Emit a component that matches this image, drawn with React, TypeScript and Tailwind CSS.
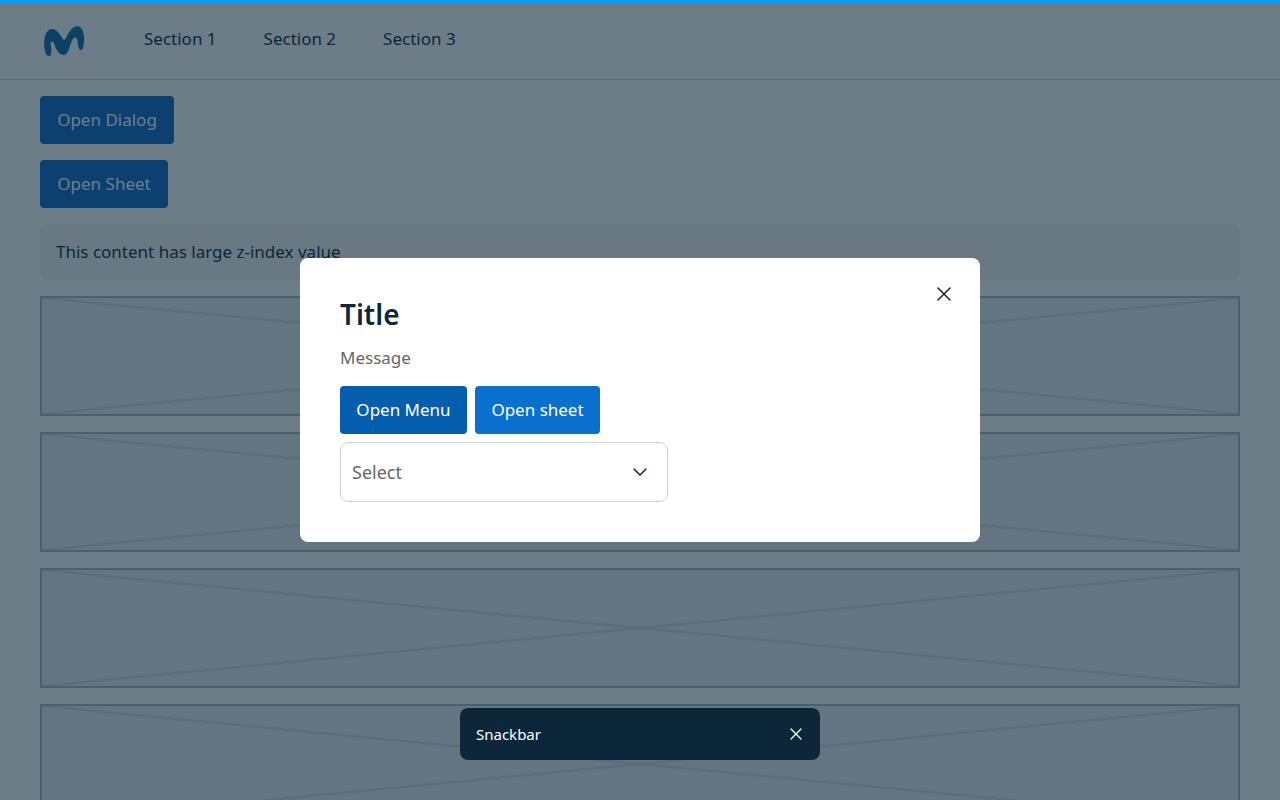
import React from "react";
import { ChevronDown, X } from "lucide-react";

const font = "font-['Noto_Sans','Open_Sans',sans-serif]";

const Placeholder = () => (
    <div className="h-[120px] shrink-0 border-2 border-[#a3b4c0] bg-[#e6eaec]">
        <svg className="h-full w-full" viewBox="0 0 100 100" preserveAspectRatio="none">
            <path d="M0 0L100 100M100 0L0 100" stroke="#cbd5dc" strokeWidth="2" vectorEffect="non-scaling-stroke" fill="none" />
        </svg>
    </div>
);

const Logo = () => (
    <svg width="40" height="30" viewBox="0 0 40 30" className="shrink-0">
        <path
            d="M4.7 30C2 30 .8 26 .3 21C-.6 12 2 3 8 3C13 3 16 9 19 13C20 14.5 21 14 22 12C25 6 28 .2 33 .2C38 .2 40 6 40 12C40 18 39.5 24 37 24C34.5 24 34.2 20 33.8 16.5C33.5 13.5 32.8 11.5 31.2 11.5C29 11.5 27.5 15.5 26 20C24.5 25 23 29 19.5 29C15.5 29 12.5 24.5 11 20C10.2 17.5 9.3 15.5 8 15.5C6.6 15.5 6.5 18 7 21C7.6 25 7.8 30 4.7 30Z"
            fill="#0b6aa6"
        />
    </svg>
);

const App = () => {
    return (
        <div className={`relative h-[800px] w-[1280px] overflow-hidden bg-white text-[17px] text-[#0b2739] ${font}`}>
            {/* page under the overlay */}
            <div className="h-1 bg-[#0b9cf0]" />
            <header className="flex h-[76px] items-center gap-[47px] border-b border-[#0b2739]/20 pb-[6px] pl-10">
                <div className="mr-[13px] flex pt-[4px] pl-1">
                    <Logo />
                </div>
                {["Section 1", "Section 2", "Section 3"].map((s) => (
                    <span key={s} className="leading-6">
                        {s}
                    </span>
                ))}
            </header>
            <main className="flex flex-col items-start gap-4 px-10 pt-4">
                <button className="h-12 w-[134px] rounded bg-[#0b66c3] text-white">Open Dialog</button>
                <button className="h-12 w-[128px] rounded bg-[#0b66c3] text-white">Open Sheet</button>
                <div className="flex h-14 w-full items-center rounded-lg bg-[#f4f5f6] px-4">
                    This content has large z-index value
                </div>
                <div className="flex w-full flex-col gap-4">
                    <Placeholder />
                    <Placeholder />
                    <Placeholder />
                    <Placeholder />
                </div>
            </main>

            {/* overlay and dialog */}
            <div className="absolute inset-x-0 top-1 bottom-0 bg-[#0b2739]/60" />
            <div className="absolute top-[258px] left-[300px] flex h-[284px] w-[680px] flex-col items-start rounded-lg bg-white px-10 pt-10">
                <button className="absolute top-[24px] right-[24px] flex h-6 w-6 items-center justify-center text-[#0b2739]">
                    <X size={24} strokeWidth={1.5} />
                </button>
                <h2 className="text-[28px] leading-8 font-semibold">Title</h2>
                <p className="mt-[16px] leading-6 text-[#666]">Message</p>
                <div className="mt-4 flex gap-2">
                    <button className="h-12 w-[127px] rounded bg-[#055ead] text-white">Open Menu</button>
                    <button className="h-12 w-[125px] rounded bg-[#0a70ce] text-white">Open sheet</button>
                </div>
                <div className="mt-2 flex h-[60px] w-[328px] items-center justify-between rounded-lg border border-[#d3d3d3] pr-[15px] pl-[11px] text-[18px] text-[#666]">
                    <span>Select</span>
                    <ChevronDown size={24} strokeWidth={1.5} className="text-[#0b2739]" />
                </div>
            </div>

            {/* snackbar */}
            <div className="absolute top-[708px] left-[460px] flex h-[52px] w-[360px] items-center justify-between rounded-lg bg-[#0b2739] pr-[14px] pl-4 text-[15px] text-white">
                <span>Snackbar</span>
                <X size={20} strokeWidth={1.5} />
            </div>
        </div>
    );
};

export default App;
